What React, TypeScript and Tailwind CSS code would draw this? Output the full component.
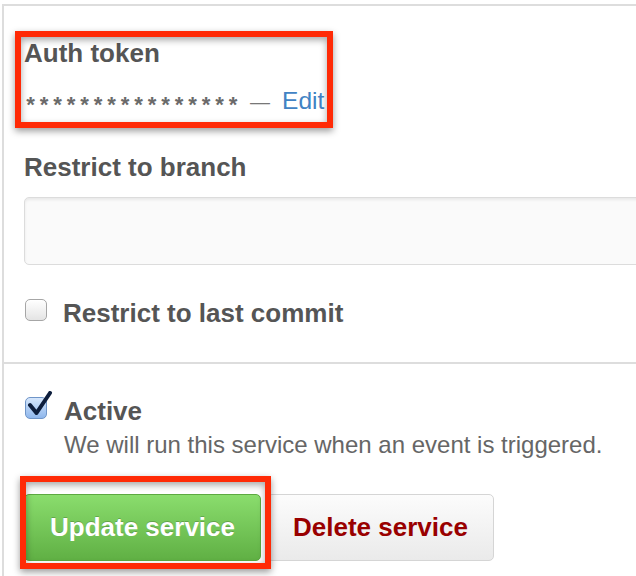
import React from 'react';

const font = { fontFamily: '"Liberation Sans", Arial, sans-serif' };

const Checkbox: React.FC<{ checked?: boolean }> = ({ checked }) => (
  <span className="relative inline-block w-[22px] h-[22px] shrink-0">
    {checked ? (
      <>
        <span className="absolute inset-0 rounded-[5px] border border-[#6f95c8] bg-gradient-to-b from-[#d6e7fc] to-[#8fb7ec]" />
        <svg className="absolute -top-[6px] left-[2px] w-[26px] h-[26px]" viewBox="0 0 26 26" fill="none">
          <path d="M3 14 L9.5 22 L23 2" stroke="#0d1e3d" strokeWidth="4" strokeLinecap="round" strokeLinejoin="round" />
        </svg>
      </>
    ) : (
      <span className="absolute inset-0 rounded-[5px] border border-[#a6a6a6] bg-gradient-to-b from-white to-[#e4e4e4] shadow-[inset_0_1px_1px_rgba(255,255,255,0.9)]" />
    )}
  </span>
);

const Callout: React.FC<{ className: string }> = ({ className }) => (
  <div
    className={
      'pointer-events-none absolute border-[6px] border-[#ff2a06] shadow-[0_3px_7px_rgba(0,0,0,0.4),inset_0_3px_7px_rgba(0,0,0,0.35)] ' +
      className
    }
  />
);

const App: React.FC = () => {
  return (
    <div className="w-[636px] h-[576px] overflow-hidden bg-white pl-[2px] pt-[4px]" style={font}>
      <div className="h-full border-l-2 border-t-2 border-[#dddddd]">
        {/* service settings */}
        <div className="pl-[20px] pb-[34px]">
          <div className="relative mt-[32px]">
            <h3 className="text-[26px] leading-[30px] font-bold text-[#555]">Auth token</h3>
            <div className="mt-[18px] h-[30px] flex items-baseline leading-[30px] text-[24px]">
              <span
                className="relative top-[4px] text-[22px] font-bold tracking-[0.3px] text-[#6a6a6a]"
                style={{ fontFamily: '"Liberation Mono", "Courier New", monospace' }}
              >
                ****************
              </span>
              <span className="ml-[10px] text-[20px] text-[#777]">—</span>
              <a href="#" className="ml-[12px] text-[24.5px] text-[#4183c4]">Edit</a>
            </div>
            <Callout className="-left-[9px] -top-[7px] w-[318px] h-[97px]" />
          </div>

          <label className="block mt-[36px] text-[26px] leading-[30px] font-bold text-[#555]">
            Restrict to branch
          </label>
          <input
            type="text"
            className="block mt-[15px] w-[700px] h-[68px] rounded-[5px] border border-[#dcdcdc] bg-[#fafafa] shadow-[inset_0_2px_3px_rgba(0,0,0,0.07)] outline-none"
          />

          <label className="mt-[33px] flex items-center h-[30px]">
            <span className="ml-[1px]"><Checkbox /></span>
            <span className="ml-[16px] text-[26px] leading-[30px] font-bold text-[#555]">Restrict to last commit</span>
          </label>
        </div>

        {/* active + actions */}
        <div className="border-t-2 border-[#dddddd] pl-[20px] pt-[32px]">
          <label className="flex items-center h-[30px]">
            <span className="ml-[1px] mt-[1px]"><Checkbox checked /></span>
            <span className="ml-[17px] text-[26px] leading-[30px] font-bold text-[#555]">Active</span>
          </label>
          <p className="mt-[4px] ml-[40px] text-[24px] leading-[30px] text-[#666]">
            We will run this service when an event is triggered.
          </p>

          <div className="mt-[34px] flex gap-[6px]">
            <div className="relative">
              <button className="h-[67px] px-[25px] rounded-[5px] border border-[#5ca941] bg-gradient-to-b from-[#8add6d] to-[#60b044] text-[26px] font-bold text-white [text-shadow:0_-1px_0_rgba(0,0,0,0.2)]">
                Update service
              </button>
              <Callout className="-left-[4px] -top-[18px] w-[251px] h-[93px]" />
            </div>
            <button className="h-[67px] px-[25px] rounded-[5px] border border-[#d5d5d5] bg-gradient-to-b from-[#fcfcfc] to-[#eaeaea] text-[26px] font-bold text-[#990000]">
              Delete service
            </button>
          </div>
        </div>
      </div>
    </div>
  );
};

export default App;
